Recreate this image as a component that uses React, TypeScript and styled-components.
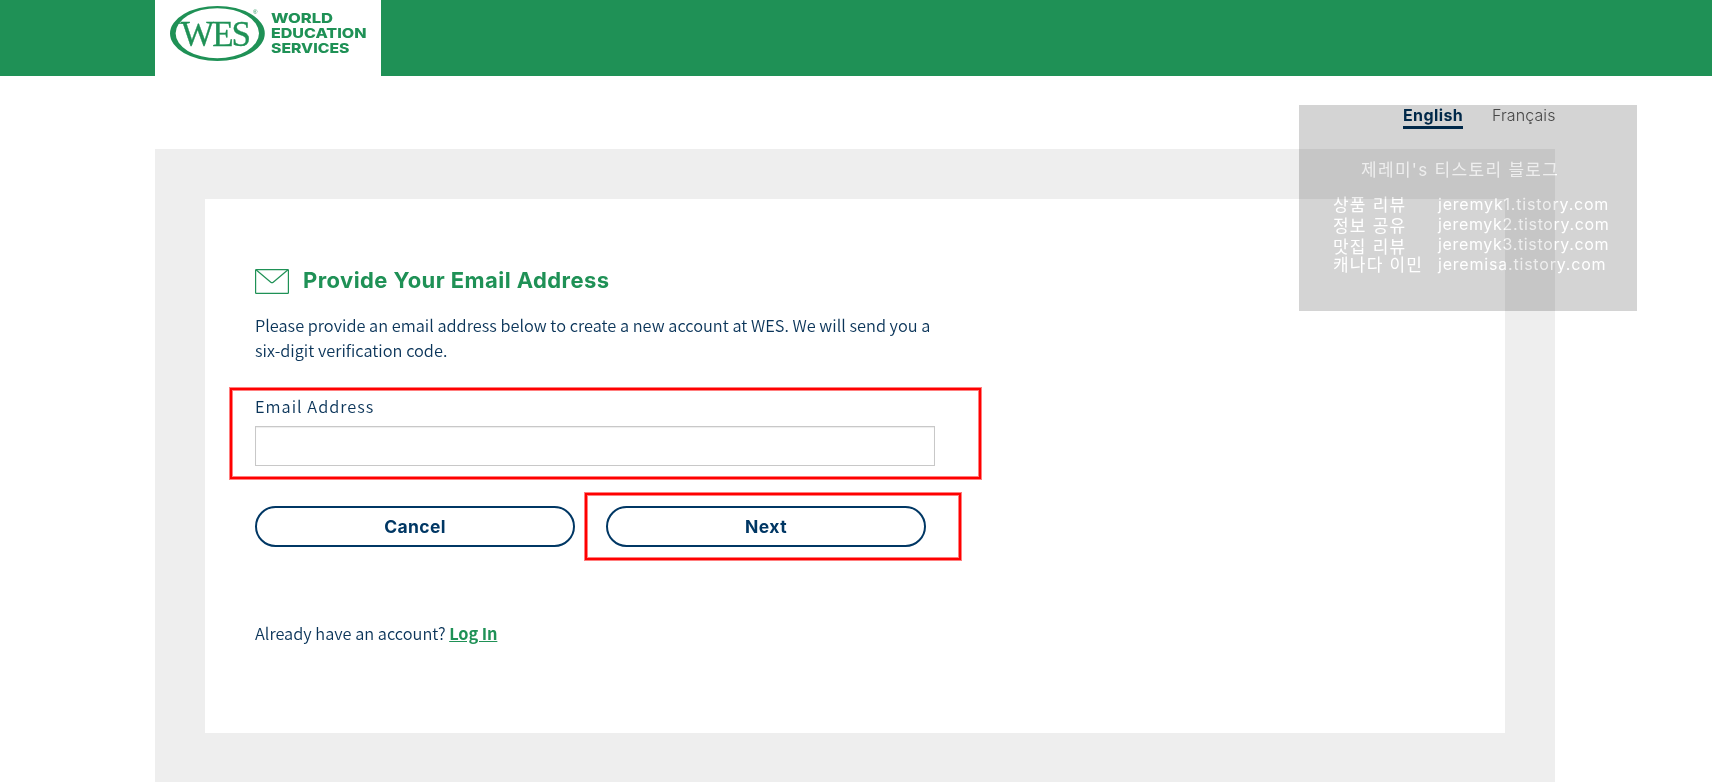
import React, { useState } from "react";
import styled, { createGlobalStyle, ThemeProvider } from "styled-components";

const theme = {
  colorGreen: "#1f9156",
  colorNavy: "#003764",
  colorText: "#0a3459",
  colorGrey: "#eeeeee",
  colorBorder: "#c8c8c8",
  colorWhite: "#ffffff",
  fontHeading: `Inter, "Noto Sans CJK KR", sans-serif`,
  fontBody: `"Noto Sans CJK KR", "Noto Sans", sans-serif`,
};

const blogs = [
  { name: "상품 리뷰", url: "jeremyk1.tistory.com", drop: 1, spacing: 0.8 },
  { name: "정보 공유", url: "jeremyk2.tistory.com", drop: 2, spacing: 0.65 },
  { name: "맛집 리뷰", url: "jeremyk3.tistory.com", drop: 3, spacing: 0.65 },
  { name: "캐나다 이민", url: "jeremisa.tistory.com", drop: 1, spacing: 0.8 },
];

function Logo() {
  return (
    <LogoSvg width="226" height="76" viewBox="0 0 226 76">
      <path
        fillRule="evenodd"
        d="M15 33.5a47.4 27.5 0 1 0 94.8 0a47.4 27.5 0 1 0 -94.8 0ZM20.6 33.2a41.7 25 0 1 1 83.4 0a41.7 25 0 1 1 -83.4 0Z"
      />
      <text className="wes" x="26" y="45.8">
        WES
      </text>
      <path d="M21 22.6h11v1.2h-11z" />
      <text className="mark" x="98" y="14">
        ®
      </text>
      <g className="name">
        <text x="116" y="23" textLength="62" lengthAdjust="spacingAndGlyphs">WORLD</text>
        <text x="116" y="38.3" textLength="95.5" lengthAdjust="spacingAndGlyphs">EDUCATION</text>
        <text x="116" y="53.3" textLength="78.5" lengthAdjust="spacingAndGlyphs">SERVICES</text>
      </g>
    </LogoSvg>
  );
}

function EnvelopeIcon() {
  return (
    <svg width="34" height="25" viewBox="0 0 34 25" fill="none" stroke="#1f9156">
      <rect x="0.6" y="0.6" width="32.8" height="23.8" rx="0.6" strokeWidth="1.2" />
      <path d="M1 0.8L15.8 13.2Q17 14.2 18.2 13.2L33 0.8" strokeWidth="1.2" />
    </svg>
  );
}

function App() {
  const [email, setEmail] = useState("");

  return (
    <ThemeProvider theme={theme}>
      <GlobalStyle />
      <Page>
        <Header>
          <LogoBox>
            <Logo />
          </LogoBox>
        </Header>
        <Languages>
          <Language $active>English</Language>
          <Language>Français</Language>
        </Languages>
        <Panel>
          <Card>
            <TitleRow>
              <EnvelopeIcon />
              <Title>Provide Your Email Address</Title>
            </TitleRow>
            <Intro>
              Please provide an email address below to create a new account at WES. We will send you a
              <br />
              six-digit verification code.
            </Intro>
            <Field>
              <Label htmlFor="email">Email Address</Label>
              <Input id="email" type="email" value={email} onChange={(e) => setEmail(e.target.value)} />
              <Marker $top={-9} $left={-26} $width={753} $height={93} />
            </Field>
            <Buttons>
              <ButtonSlot>
                <Button type="button" $spacing="0.35px">Cancel</Button>
              </ButtonSlot>
              <ButtonSlot>
                <Button type="button" $spacing="0.5px">Next</Button>
                <Marker $top={-14} $left={-22} $width={378} $height={69} />
              </ButtonSlot>
            </Buttons>
            <Account>
              Already have an account? <a href="#login">Log In</a>
            </Account>
          </Card>
        </Panel>
        <Watermark>
          <h2>제레미's 티스토리 블로그</h2>
          {blogs.map((blog) => (
            <BlogRow key={blog.url}>
              <BlogName $drop={blog.drop}>{blog.name}</BlogName>
              <BlogUrl $spacing={blog.spacing}>{blog.url}</BlogUrl>
            </BlogRow>
          ))}
        </Watermark>
      </Page>
    </ThemeProvider>
  );
}

const GlobalStyle = createGlobalStyle`
  * {
    box-sizing: border-box;
  }

  body {
    margin: 0;
    background: #fff;
    overflow: hidden;
  }
`;

const Page = styled.div`
  position: relative;
  display: flex;
  flex-direction: column;
  height: 782px;
  background: ${(props) => props.theme.colorWhite};
  color: ${(props) => props.theme.colorText};
  font-family: ${(props) => props.theme.fontBody};
`;

const Header = styled.header`
  height: 76px;
  padding-left: 155px;
  background: ${(props) => props.theme.colorGreen};
`;

const LogoBox = styled.div`
  width: 226px;
  height: 76px;
  background: ${(props) => props.theme.colorWhite};
`;

const LogoSvg = styled.svg`
  display: block;
  fill: ${(props) => props.theme.colorGreen};

  .wes {
    font: 35px "Liberation Serif", serif;
    letter-spacing: -1.9px;
    stroke: ${(props) => props.theme.colorGreen};
    stroke-width: 0.3px;
  }

  .mark {
    font: 6px "Liberation Sans", sans-serif;
  }

  .name {
    font: 800 13.8px Inter, sans-serif;
  }
`;

const Languages = styled.nav`
  display: flex;
  justify-content: flex-end;
  gap: 29px;
  height: 73px;
  width: 1400px;
  margin-left: 155px;
  padding-top: 30px;
`;

const Language = styled.span<{ $active?: boolean }>`
  height: 23px;
  width: ${(props) => (props.$active ? 60 : 63)}px;
  white-space: nowrap;
  font-family: ${(props) => props.theme.fontHeading};
  font-size: 16px;
  line-height: 19px;
  font-weight: ${(props) => (props.$active ? 700 : 300)};
  letter-spacing: ${(props) => (props.$active ? "0.4px" : "0.1px")};
  color: ${(props) => (props.$active ? "#003057" : "#555")};
  border-bottom: 3px solid ${(props) => (props.$active ? "#003057" : "transparent")};
`;

const Panel = styled.main`
  width: 1400px;
  height: 633px;
  margin-left: 155px;
  padding: 50px;
  background: ${(props) => props.theme.colorGrey};
`;

const Card = styled.section`
  height: 534px;
  padding: 65px 50px 0;
  background: ${(props) => props.theme.colorWhite};
`;

const TitleRow = styled.div`
  display: flex;
  align-items: flex-start;
  gap: 14px;
  height: 49px;
  padding-top: 5px;
`;

const Title = styled.h1`
  margin: -3px 0 0;
  font-family: ${(props) => props.theme.fontHeading};
  font-size: 22px;
  line-height: 28px;
  font-weight: 700;
  letter-spacing: 0.43px;
  color: ${(props) => props.theme.colorGreen};
`;

const Intro = styled.p`
  margin: 0;
  font-size: 16.35px;
  line-height: 25px;
  font-weight: 350;
  white-space: nowrap;
`;

const Field = styled.div`
  position: relative;
  width: 680px;
  margin-top: 33px;
`;

const Label = styled.label`
  display: block;
  height: 30px;
  font-size: 16.35px;
  line-height: 21px;
  font-weight: 350;
  letter-spacing: 1px;
`;

const Input = styled.input`
  display: block;
  width: 680px;
  height: 40px;
  padding: 0 10px;
  border: 1px solid ${(props) => props.theme.colorBorder};
  box-shadow: inset 0 1px 1px rgba(0, 0, 0, 0.075);
  font-size: 16px;
  outline: none;
`;

const Buttons = styled.div`
  display: flex;
  gap: 31px;
  margin-top: 40px;
`;

const ButtonSlot = styled.div`
  position: relative;
  width: 320px;
`;

const Button = styled.button<{ $spacing: string }>`
  display: block;
  width: 320px;
  height: 41px;
  padding: 0;
  border: 2px solid ${(props) => props.theme.colorNavy};
  border-radius: 21px;
  background: transparent;
  font-family: ${(props) => props.theme.fontHeading};
  font-size: 17.5px;
  font-weight: 700;
  letter-spacing: ${(props) => props.$spacing};
  color: ${(props) => props.theme.colorNavy};
`;

// Red frame around the part the reader has to fill in or click
const Marker = styled.div<{ $top: number; $left: number; $width: number; $height: number }>`
  position: absolute;
  top: ${(props) => props.$top + 1}px;
  left: ${(props) => props.$left + 1}px;
  width: ${(props) => props.$width - 2}px;
  height: ${(props) => props.$height - 2}px;
  border: 2px solid #ff0000;
  box-shadow: 0 0 0 1px rgba(255, 0, 0, 0.5), inset 0 0 0 1px rgba(255, 0, 0, 0.5);
  pointer-events: none;
`;

const Account = styled.p`
  margin: 74px 0 0;
  font-size: 16.35px;
  line-height: 25px;
  font-weight: 350;

  a {
    font-weight: 700;
    letter-spacing: -0.1px;
    color: ${(props) => props.theme.colorGreen};
  }
`;

const Watermark = styled.aside`
  position: absolute;
  top: 105px;
  left: 1299px;
  width: 338px;
  height: 206px;
  padding: 55px 0 0 34px;
  background: #d4d4d4;
  color: #fff;
  mix-blend-mode: multiply;
  font-family: ${(props) => props.theme.fontHeading};
  font-size: 16px;

  h2 {
    margin: 0 0 14px 28px;
    font-size: 17px;
    line-height: 20px;
    font-weight: 400;
    letter-spacing: 1.3px;
    white-space: nowrap;
  }
`;

const BlogRow = styled.div`
  display: grid;
  grid-template-columns: 105px 1fr;
  height: 20px;
  line-height: 20px;
  white-space: nowrap;
`;

const BlogName = styled.span<{ $drop: number }>`
  padding-top: ${(props) => props.$drop}px;
  font-size: 17px;
  font-weight: 400;
  letter-spacing: 1.2px;
`;

const BlogUrl = styled.span<{ $spacing: number }>`
  letter-spacing: ${(props) => props.$spacing}px;
`;

export default App;
